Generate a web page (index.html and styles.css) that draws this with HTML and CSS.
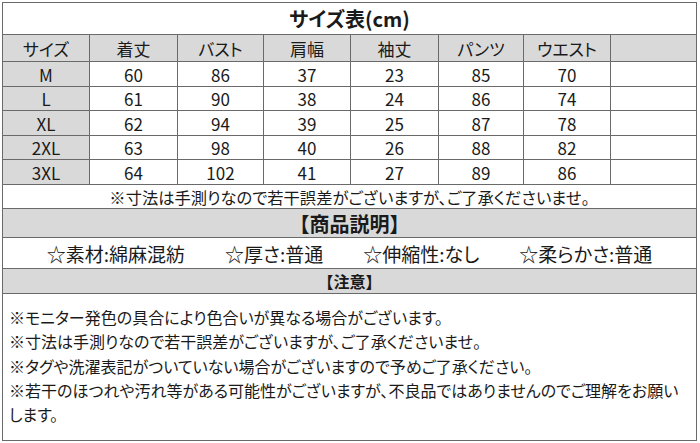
FILE: index.html
```html
<!DOCTYPE html>
<html lang="ja">
<head>
<meta charset="utf-8">
<link rel="stylesheet" href="styles.css">
</head>
<body>
<div class="sheet">
  <div class="row title">サイズ表(cm)</div>
  <div class="row grid head">
    <div class="cell">サイズ</div>
    <div class="cell">着丈</div>
    <div class="cell">バスト</div>
    <div class="cell">肩幅</div>
    <div class="cell">袖丈</div>
    <div class="cell">パンツ</div>
    <div class="cell">ウエスト</div>
    <div class="cell"></div>
  </div>
  <div class="row grid data">
    <div class="cell size">M</div><div class="cell">60</div><div class="cell">86</div><div class="cell">37</div><div class="cell">23</div><div class="cell">85</div><div class="cell">70</div><div class="cell"></div>
  </div>
  <div class="row grid data">
    <div class="cell size">L</div><div class="cell">61</div><div class="cell">90</div><div class="cell">38</div><div class="cell">24</div><div class="cell">86</div><div class="cell">74</div><div class="cell"></div>
  </div>
  <div class="row grid data">
    <div class="cell size">XL</div><div class="cell">62</div><div class="cell">94</div><div class="cell">39</div><div class="cell">25</div><div class="cell">87</div><div class="cell">78</div><div class="cell"></div>
  </div>
  <div class="row grid data">
    <div class="cell size">2XL</div><div class="cell">63</div><div class="cell">98</div><div class="cell">40</div><div class="cell">26</div><div class="cell">88</div><div class="cell">82</div><div class="cell"></div>
  </div>
  <div class="row grid data">
    <div class="cell size">3XL</div><div class="cell">64</div><div class="cell">102</div><div class="cell">41</div><div class="cell">27</div><div class="cell">89</div><div class="cell">86</div><div class="cell"></div>
  </div>
  <div class="row note">※寸法は手測りなので若干誤差がございますが、ご了承くださいませ。</div>
  <div class="row section">【商品説明】</div>
  <div class="row specs">
    <span>☆素材:綿麻混紡</span>
    <span>☆厚さ:普通</span>
    <span>☆伸縮性:なし</span>
    <span>☆柔らかさ:普通</span>
  </div>
  <div class="row caution">【注意】</div>
  <div class="row notes">
    <p>※モニター発色の具合により色合いが異なる場合がございます。</p>
    <p>※寸法は手測りなので若干誤差がございますが、ご了承くださいませ。</p>
    <p>※タグや洗濯表記がついていない場合がございますので予めご了承ください。</p>
    <p>※若干のほつれや汚れ等がある可能性がございますが、不良品ではありませんのでご理解をお願いします。</p>
  </div>
</div>
</body>
</html>
```

FILE: styles.css
```css
* { box-sizing: border-box; }
html, body { margin: 0; padding: 0; background: #ffffff; }
body {
  font-family: "Noto Sans CJK JP", "Noto Sans", sans-serif;
  color: #1a1a1a;
}
.sheet {
  margin: 2px 0 0 2px;
  width: 695px;
  border: 1px solid #6a6a6a;
}
.row {
  border-bottom: 1px solid #6a6a6a;
  display: flex;
  align-items: center;
  justify-content: center;
}
.row:last-child { border-bottom: none; }
.title {
  height: 32px;
  font-size: 20px;
  font-weight: 700;
  font-feature-settings: "palt";
}
.grid {
  display: grid;
  grid-template-columns: 87px 88px 86px 87px 88px 85px 87px 1fr;
  align-items: stretch;
  font-size: 17px;
  font-feature-settings: "palt";
}
.cell {
  border-right: 1px solid #6a6a6a;
  display: flex;
  align-items: center;
  justify-content: center;
  line-height: 1;
}
.cell:last-child { border-right: none; }
.head { height: 27px; background: #d9d9d9; }
.data { height: 25px; }
.data:nth-child(even) { height: 24px; }
.size { background: #d9d9d9; }
.note {
  height: 24px;
  font-size: 16.3px;
  font-feature-settings: "palt";
}
.section {
  height: 29px;
  background: #d9d9d9;
  font-size: 20px;
  font-weight: 700;
}
.specs {
  height: 31px;
  font-size: 19px;
  font-feature-settings: "palt";
  gap: 40px;
}
.caution {
  height: 25px;
  background: #d9d9d9;
  font-size: 16px;
  font-weight: 700;
}
.notes {
  height: 146px;
  display: block;
  padding: 11px 12px 0 6px;
  font-size: 16px;
  line-height: 24.3px;
  font-feature-settings: "palt";
}
.notes p { margin: 0; }
```
